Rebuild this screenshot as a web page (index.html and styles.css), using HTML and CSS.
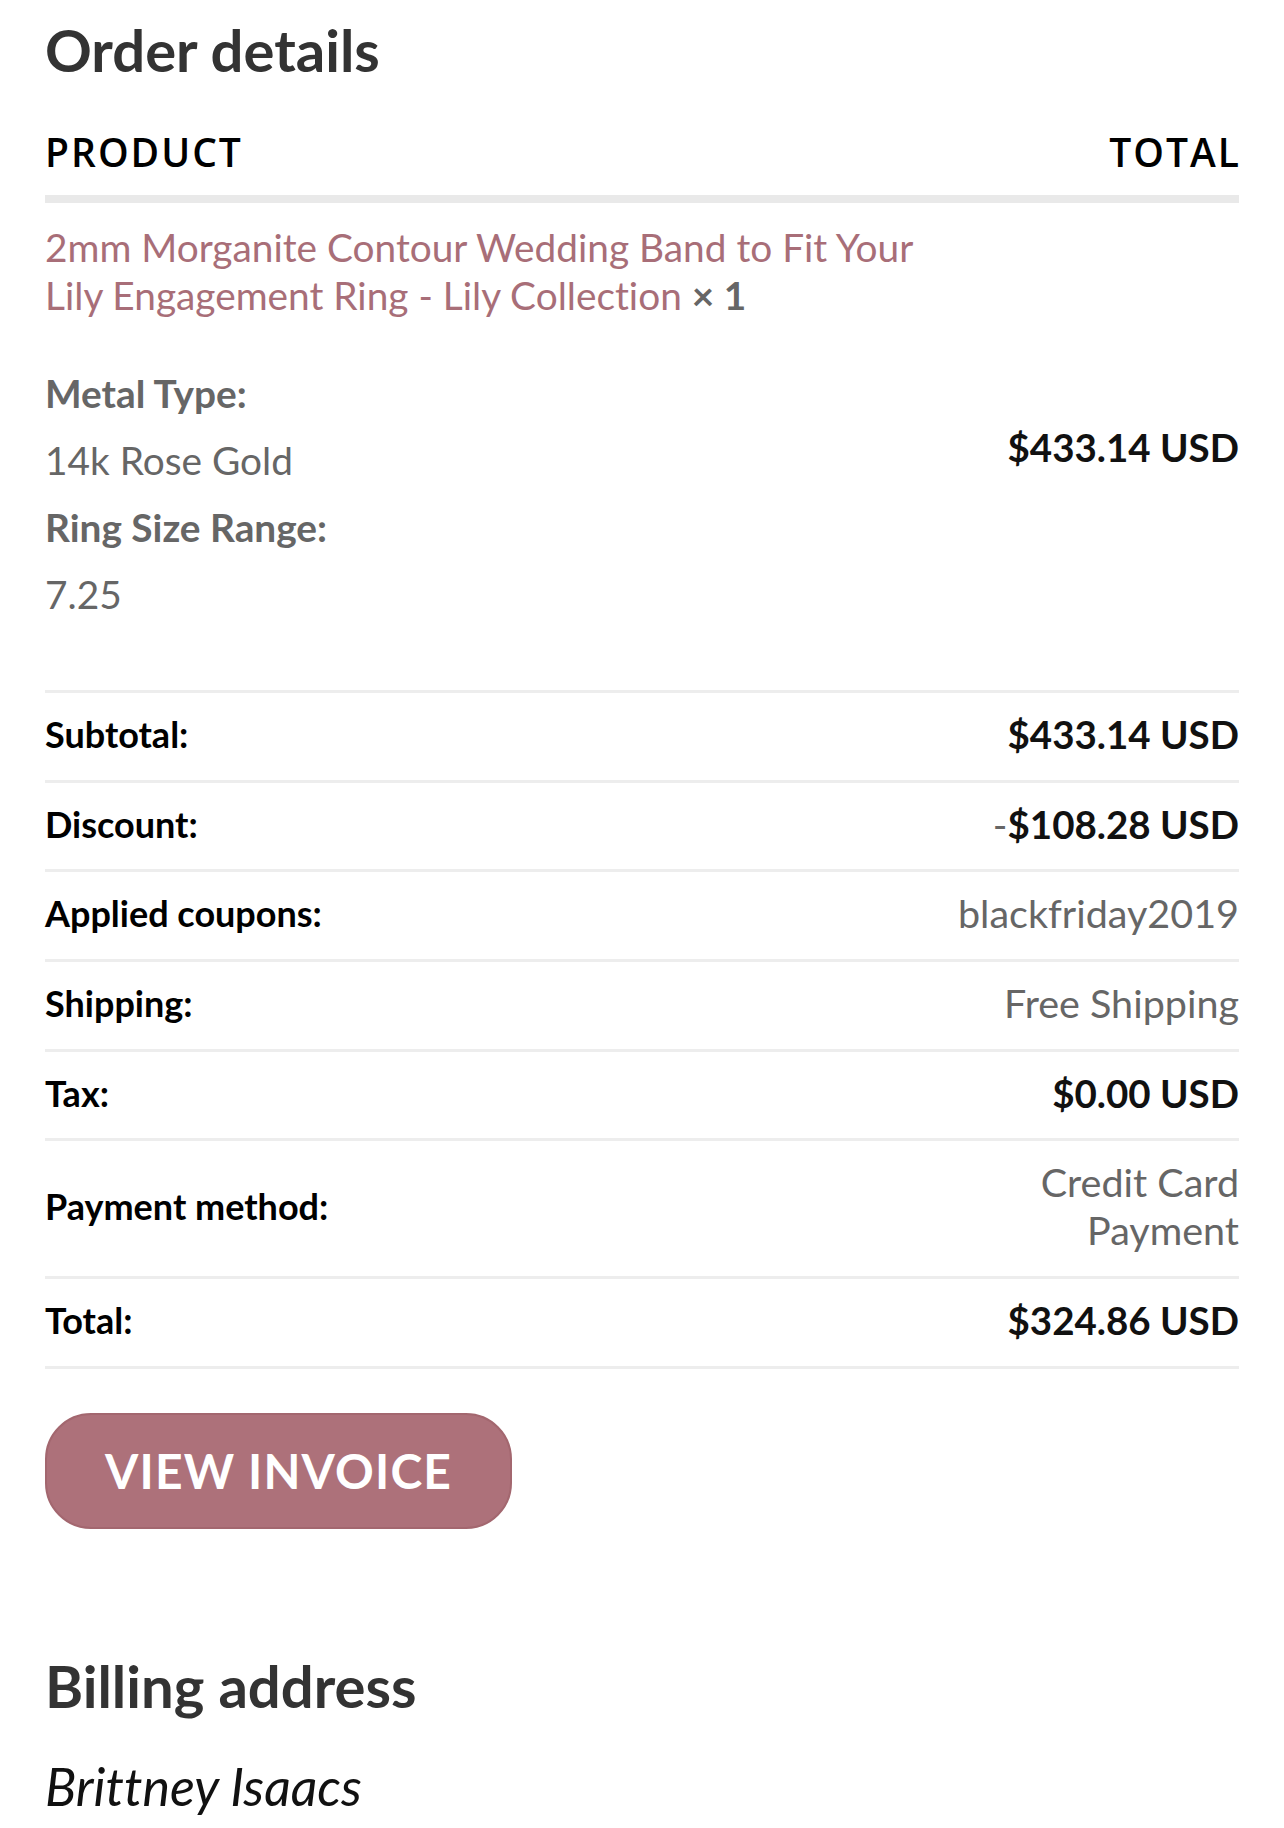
FILE: index.html
```html
<!DOCTYPE html>
<html lang="en">
<head>
<meta charset="utf-8">
<title>Order details</title>
<link rel="stylesheet" href="styles.css">
</head>
<body>
<main class="page">
  <section class="order">
    <h2 class="section-title">Order details</h2>
    <div class="order-table">
      <div class="row head">
        <div class="cell">PRODUCT</div>
        <div class="cell right">TOTAL</div>
      </div>
      <div class="row item">
        <div class="cell product-name">
          <p class="name-line"><a class="name-link" href="#">2mm Morganite Contour Wedding Band to Fit Your Lily Engagement Ring - Lily Collection</a> <strong class="qty">×&nbsp;1</strong></p>
          <ul class="meta">
            <li class="meta-label">Metal Type:</li>
            <li class="meta-value">14k Rose Gold</li>
            <li class="meta-label">Ring Size Range:</li>
            <li class="meta-value">7.25</li>
          </ul>
        </div>
        <div class="cell right product-total"><span class="amount">$433.14&nbsp;USD</span></div>
      </div>
      <div class="row foot">
        <div class="cell label">Subtotal:</div>
        <div class="cell right value"><span class="amount">$433.14&nbsp;USD</span></div>
      </div>
      <div class="row foot">
        <div class="cell label">Discount:</div>
        <div class="cell right value">-<span class="amount">$108.28&nbsp;USD</span></div>
      </div>
      <div class="row foot">
        <div class="cell label">Applied coupons:</div>
        <div class="cell right value">blackfriday2019</div>
      </div>
      <div class="row foot">
        <div class="cell label">Shipping:</div>
        <div class="cell right value">Free Shipping</div>
      </div>
      <div class="row foot">
        <div class="cell label">Tax:</div>
        <div class="cell right value"><span class="amount">$0.00&nbsp;USD</span></div>
      </div>
      <div class="row foot">
        <div class="cell label">Payment method:</div>
        <div class="cell right value">Credit Card<br>Payment</div>
      </div>
      <div class="row foot">
        <div class="cell label">Total:</div>
        <div class="cell right value"><span class="amount">$324.86&nbsp;USD</span></div>
      </div>
    </div>
    <div class="actions">
      <a class="button" href="#">VIEW INVOICE</a>
    </div>
  </section>
  <section class="billing">
    <h2 class="section-title billing-title">Billing address</h2>
    <address class="address">Brittney Isaacs</address>
  </section>
</main>
</body>
</html>
```

FILE: styles.css
```css
html, body {
  margin: 0;
  padding: 0;
  background: #ffffff;
}

body {
  font-family: Lato, "Open Sans", "Liberation Sans", sans-serif;
  color: #666666;
  font-variant-ligatures: none;
}

.page {
  padding: 0 45px;
}

.section-title {
  margin: 15px 0 0;
  font-size: 58px;
  line-height: 1.2;
  font-weight: 700;
  color: #333333;
}

.order-table {
  margin-top: 44.6px;
}

.row {
  display: grid;
  grid-template-columns: minmax(0, 1fr) 300px;
}

.right {
  text-align: right;
}

.head {
  font-family: "Open Sans", Lato, sans-serif;
  font-weight: 600;
  font-size: 39px;
  line-height: 46.8px;
  color: #000000;
  padding-bottom: 19px;
  border-bottom: 8px solid #e9e9e9;
  letter-spacing: 2px;
}

.head .right {
  margin-right: -2px;
}

.item {
  padding: 20px 0 21px;
  border-bottom: 3px solid #ededed;
}

.product-name {
  min-width: 0;
}

.name-line {
  margin: 0;
  font-size: 38.8px;
  line-height: 48px;
}

.name-link {
  color: #a86e78;
  text-decoration: none;
}

.qty {
  color: #666666;
  font-weight: 700;
}

.meta {
  list-style: none;
  margin: 41px 0 41px;
  padding: 0;
  font-size: 38.8px;
  line-height: 67px;
  color: #666666;
}

.meta-label {
  font-weight: 700;
}

.product-total {
  align-self: center;
  font-size: 38.5px;
  line-height: 48px;
  padding-top: 3px;
}

.amount {
  font-size: 38.5px;
  font-weight: 700;
  color: #111111;
}

.foot {
  padding: 17px 0 21.7px;
  border-bottom: 3px solid #ededed;
  align-items: center;
  line-height: 48px;
}

.label {
  font-size: 36px;
  font-weight: 700;
  color: #000000;
}

.value {
  font-size: 39.5px;
  color: #666666;
}

.actions {
  display: flex;
  margin-top: 44px;
}

.button {
  box-sizing: border-box;
  display: block;
  height: 116px;
  line-height: 112px;
  padding: 0 58px;
  border: 2px solid #a3676f;
  border-radius: 46px;
  background: #ad717a;
  color: #ffffff;
  font-size: 48px;
  font-weight: 700;
  letter-spacing: 1.2px;
  text-decoration: none;
}

.billing-title {
  margin-top: 122px;
}

.address {
  margin-top: 35px;
  font-size: 52px;
  line-height: 1.2;
  font-style: italic;
  color: #111111;
}
```
